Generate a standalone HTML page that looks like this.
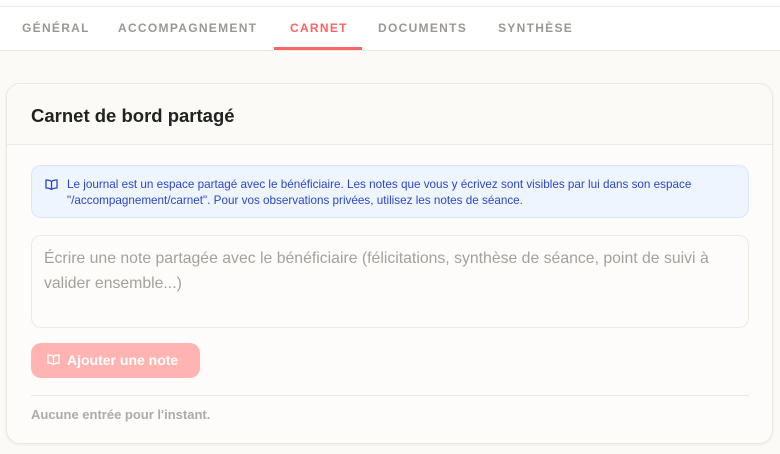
<!DOCTYPE html>
<html><head><meta charset="utf-8"><style>
*{box-sizing:border-box;margin:0;padding:0}
body{width:780px;height:454px;background:#fbfaf6;font-family:"Liberation Sans",sans-serif;position:relative;overflow:hidden}
.top{position:absolute;left:0;top:0;width:780px;height:7px;background:#fff;border-bottom:1px solid #ece9e2}
.nav{position:absolute;left:0;top:7px;width:780px;height:44px;background:#fff;border-bottom:1px solid #efe9e1}
.tab{position:absolute;top:14px;font-size:12px;font-weight:bold;letter-spacing:1.3px;color:#9a9894}
.tab.on{color:#f76565}
.ul{position:absolute;left:274px;top:40px;width:88px;height:3px;background:#f76565}
.card{position:absolute;left:6px;top:83px;width:767px;height:361px;background:#fdfcfa;border:1px solid #ece8e1;border-radius:14px;box-shadow:0 1px 3px rgba(0,0,0,.06);overflow:hidden}
.hd{height:61px;border-bottom:1px solid #efe9e1;background:#fbfaf6}
.hd h2{position:absolute;left:24px;top:21px;font-size:18.5px;font-weight:bold;color:#222}
.info{position:absolute;left:24px;top:81px;width:718px;height:53px;background:#eef5ff;border:1px solid #d8e6fb;border-radius:10px;color:#2b46c8;font-size:11.7px;line-height:15.5px;padding:11px 10px 0 35px}
.info svg{position:absolute;left:13px;top:13px}
.ta{position:absolute;left:24px;top:151px;width:718px;height:93px;border:1px solid #efeae1;border-radius:10px;background:#fdfcfa;color:#a4a19c;font-size:15.8px;line-height:25px;padding:10px 12px}
.btn{position:absolute;left:24px;top:259px;width:169px;height:35px;background:#ffb4b2;border-radius:10px;color:#fff;font-weight:bold;font-size:14px;padding:9px 0 0 36px}
.btn svg{position:absolute;left:16px;top:11px}
.hr{position:absolute;left:24px;top:311px;width:718px;height:1px;background:#ece8e1}
.none{position:absolute;left:24px;top:323px;font-size:13px;font-weight:bold;color:#aeaba6}
</style></head><body>
<div class="top"></div>
<div class="nav">
<span class="tab" style="left:22px">GÉNÉRAL</span>
<span class="tab" style="left:118px">ACCOMPAGNEMENT</span>
<span class="tab on" style="left:290px">CARNET</span>
<span class="tab" style="left:378px">DOCUMENTS</span>
<span class="tab" style="left:498px">SYNTHÈSE</span>
<div class="ul"></div>
</div>
<div class="card">
<div class="hd"><h2>Carnet de bord partagé</h2></div>
<div class="info"><svg width="13" height="11" viewBox="0 0 13 11" fill="none" stroke="#2b46c8" stroke-width="1.3"><path d="M6.5 2.5C5 1.2 3 1 1 1v8c2 0 4 .3 5.5 1.5C8 9.3 10 9 12 9V1c-2 0-4 .2-5.5 1.5zM6.5 2.5v8"/></svg>Le journal est un espace partagé avec le bénéficiaire. Les notes que vous y écrivez sont visibles par lui dans son espace "/accompagnement/carnet". Pour vos observations privées, utilisez les notes de séance.</div>
<div class="ta">Écrire une note partagée avec le bénéficiaire (félicitations, synthèse de séance, point de suivi à valider ensemble...)</div>
<div class="btn"><svg width="13" height="11" viewBox="0 0 13 11" fill="none" stroke="#fff" stroke-width="1.3"><path d="M6.5 2.5C5 1.2 3 1 1 1v8c2 0 4 .3 5.5 1.5C8 9.3 10 9 12 9V1c-2 0-4 .2-5.5 1.5zM6.5 2.5v8"/></svg>Ajouter une note</div>
<div class="hr"></div>
<div class="none">Aucune entrée pour l'instant.</div>
</div>
</body></html>
